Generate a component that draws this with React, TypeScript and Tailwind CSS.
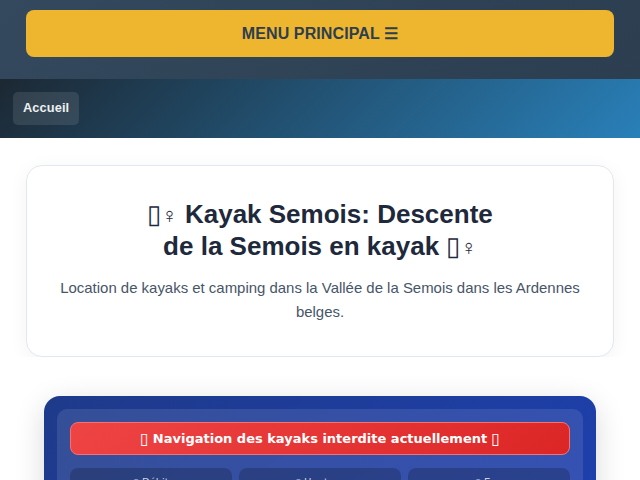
const Rower = () => (
  <span className="font-normal">
    ▯<span className="text-[22px]">♀︎</span>
  </span>
);

const App = () => {
  return (
    <div className="h-[480px] overflow-hidden bg-white font-['Liberation_Sans',sans-serif]">
      <div className="bg-[linear-gradient(135deg,#34495e,#2c3e50)] px-[26px] pt-[10px] pb-[22px]">
        <button className="block h-[47px] w-full rounded-[8px] bg-[#eeb62f] text-[16px] font-bold tracking-[0.1px] text-[#2c3e50]">
          MENU PRINCIPAL ☰
        </button>
      </div>
      <nav className="flex h-[59px] items-center bg-[linear-gradient(135deg,#1c2833,#2980b9)] px-[13px]">
        <a className="rounded-[5px] bg-white/10 px-[10px] pt-[6px] pb-[8px] text-[12.8px] font-bold tracking-[0.1px] text-[#ecf0f1]">
          Accueil
        </a>
      </nav>
      <div className="mx-[13px] overflow-hidden px-[13px] pt-[27px]">
        <div className="rounded-[16px] border border-[#e2e8f0] bg-white px-[27px] pt-[33px] pb-[32px] text-center shadow-[0_4px_20px_rgba(0,0,0,0.05)]">
          <h1 className="text-[26px] leading-[31.2px] font-bold text-[#1e293b]">
            <Rower /> Kayak Semois: Descente
            <br />
            de la Semois en kayak <Rower />
          </h1>
          <p className="mt-[13px] text-[14.95px] leading-[24px] text-[#475569]">
            Location de kayaks et camping dans la Vallée de la Semois dans les Ardennes belges.
          </p>
        </div>
      </div>
      <section className="px-[44px] pt-[39px]">
        <div className="rounded-[16px] bg-[linear-gradient(135deg,#1e3a8a,#1e40af)] p-[13px] shadow-[0_8px_30px_rgba(0,0,0,0.15)]">
          <div className="rounded-[10px] bg-white/10 p-[13px] font-['DejaVu_Sans',sans-serif]">
            <div className="flex h-[33px] items-center justify-center gap-[4px] rounded-[8px] border border-[#f87171] bg-[linear-gradient(135deg,#ef4444,#dc2626)] text-[13px] font-bold text-white">
              <span className="text-[16px] font-normal">▯</span>
              <span>Navigation des kayaks interdite actuellement</span>
              <span className="text-[16px] font-normal">▯</span>
            </div>
            <div className="mt-[13px] grid grid-cols-3 gap-[7px]">
              <div className="h-[60px] rounded-[8px] bg-black/20 pt-[7px] text-center text-[10px] text-[#cbd5e1]">▯ Débit</div>
              <div className="h-[60px] rounded-[8px] bg-black/20 pt-[7px] text-center text-[10px] text-[#cbd5e1]">▯ Hauteur</div>
              <div className="h-[60px] rounded-[8px] bg-black/20 pt-[7px] text-center text-[10px] text-[#cbd5e1]">▯ Eau</div>
            </div>
          </div>
        </div>
      </section>
    </div>
  );
};

export default App;
